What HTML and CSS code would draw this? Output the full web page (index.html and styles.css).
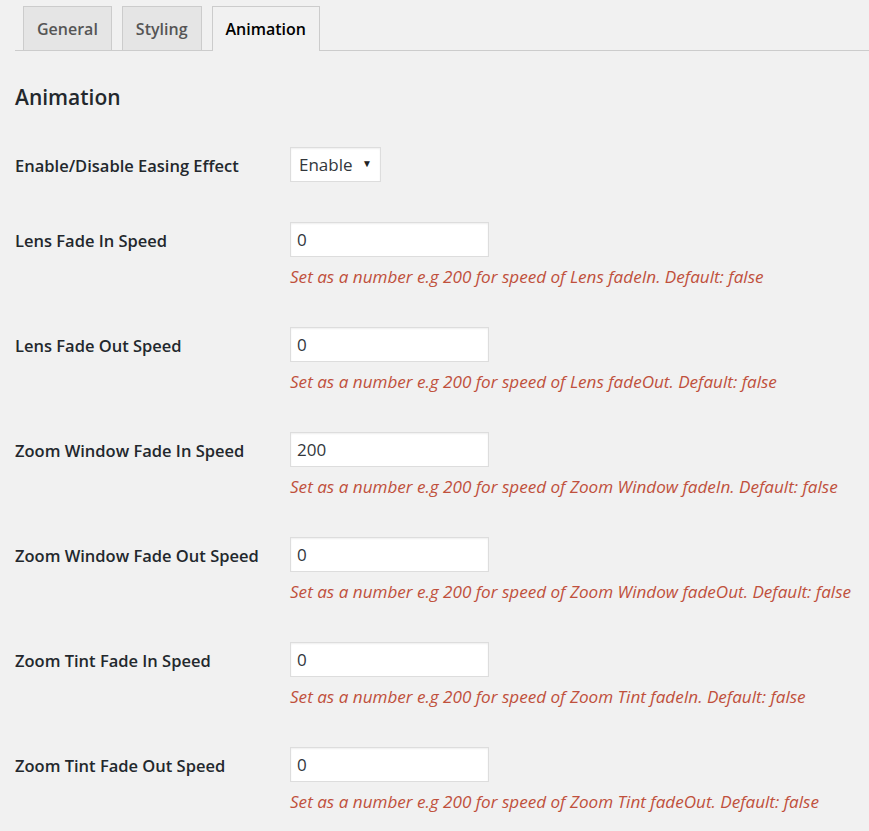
FILE: index.html
```html
<!DOCTYPE html>
<html>
<head>
<meta charset="utf-8">
<link rel="stylesheet" href="styles.css">
</head>
<body>
<nav class="tabs">
  <a class="tab">General</a>
  <a class="tab">Styling</a>
  <a class="tab active">Animation</a>
</nav>
<h2 class="section-title">Animation</h2>
<div class="form">
  <div class="row row-select">
    <label class="label">Enable/Disable Easing Effect</label>
    <div class="field">
      <div class="select"><span>Enable</span><span class="arrow">&#9660;</span></div>
    </div>
  </div>
  <div class="row">
    <label class="label">Lens Fade In Speed</label>
    <div class="field">
      <div class="input">0</div>
      <p class="desc">Set as a number e.g 200 for speed of Lens fadeIn. Default: false</p>
    </div>
  </div>
  <div class="row">
    <label class="label">Lens Fade Out Speed</label>
    <div class="field">
      <div class="input">0</div>
      <p class="desc">Set as a number e.g 200 for speed of Lens fadeOut. Default: false</p>
    </div>
  </div>
  <div class="row">
    <label class="label">Zoom Window Fade In Speed</label>
    <div class="field">
      <div class="input">200</div>
      <p class="desc">Set as a number e.g 200 for speed of Zoom Window fadeIn. Default: false</p>
    </div>
  </div>
  <div class="row">
    <label class="label">Zoom Window Fade Out Speed</label>
    <div class="field">
      <div class="input">0</div>
      <p class="desc">Set as a number e.g 200 for speed of Zoom Window fadeOut. Default: false</p>
    </div>
  </div>
  <div class="row">
    <label class="label">Zoom Tint Fade In Speed</label>
    <div class="field">
      <div class="input">0</div>
      <p class="desc">Set as a number e.g 200 for speed of Zoom Tint fadeIn. Default: false</p>
    </div>
  </div>
  <div class="row">
    <label class="label">Zoom Tint Fade Out Speed</label>
    <div class="field">
      <div class="input">0</div>
      <p class="desc">Set as a number e.g 200 for speed of Zoom Tint fadeOut. Default: false</p>
    </div>
  </div>
</div>
</body>
</html>
```
FILE: styles.css
```css
html, body {
  margin: 0;
  padding: 0;
  background: #f1f1f1;
}
body {
  font-family: "Open Sans", "Noto Sans", sans-serif;
  color: #23282d;
  font-size: 17px;
}
.tabs {
  display: flex;
  gap: 10px;
  margin-left: 15px;
  padding-left: 8px;
  padding-top: 6px;
  border-bottom: 1px solid #ccc;
  height: 44px;
}
.tab {
  box-sizing: border-box;
  height: 44px;
  padding: 0 13px;
  display: flex;
  align-items: center;
  background: #e5e5e5;
  border: 1px solid #ccc;
  border-bottom: none;
  color: #555;
  font-weight: 600;
  font-size: 16px;
}
.tab.active {
  background: #f1f1f1;
  color: #000;
  height: 45px;
}
.section-title {
  margin: 31px 0 0 15px;
  font-size: 21px;
  line-height: 30px;
  font-weight: 600;
}
.form {
  margin-top: 35px;
  padding-left: 15px;
}
.row {
  display: grid;
  grid-template-columns: 275px 1fr;
  height: 105px;
}
.row-select {
  height: 75px;
}
.label {
  font-weight: 600;
  font-size: 16.5px;
  line-height: 35px;
  padding-top: 1px;
}
.select {
  box-sizing: border-box;
  width: 91px;
  height: 35px;
  background: #fff;
  border: 1px solid #ddd;
  box-shadow: inset 0 1px 2px rgba(0,0,0,.07);
  display: flex;
  align-items: center;
  justify-content: space-between;
  padding: 0 8px 0 8px;
  color: #32373c;
  font-size: 17px;
}
.arrow {
  font-size: 10px;
  color: #222;
  margin-top: -3px;
}
.input {
  box-sizing: border-box;
  width: 199px;
  height: 35px;
  background: #fff;
  border: 1px solid #ddd;
  box-shadow: inset 0 1px 2px rgba(0,0,0,.07);
  padding: 0 6px;
  line-height: 33px;
  color: #32373c;
  font-size: 17px;
}
.desc {
  margin: 8px 0 0;
  line-height: 24px;
  font-style: italic;
  color: #c0503c;
  font-size: 17.1px;
}
```
